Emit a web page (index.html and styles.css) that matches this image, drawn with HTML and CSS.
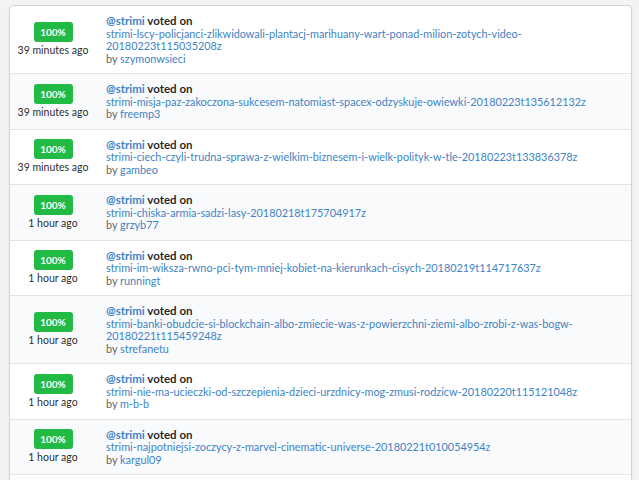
FILE: index.html
```html
<!DOCTYPE html>
<html lang="pl">
<head>
    <meta charset="UTF-8">
    <title>Votes</title>
    <link rel="stylesheet" href="styles.css">
</head>
<body>
    <div class="page">
        <div class="votes">
            <div class="vote-row">
                <div class="when"><span class="pct">100%</span><span class="ago">39 minutes ago</span></div>
                <div class="what">
                    <div class="head"><a href="#">@strimi</a> voted on</div>
                    <a class="post" href="#">strimi-lscy-policjanci-zlikwidowali-plantacj-marihuany-wart-ponad-milion-zotych-video-20180223t115035208z</a>
                    <div class="by">by <a href="#">szymonwsieci</a></div>
                </div>
            </div>
            <div class="vote-row">
                <div class="when"><span class="pct">100%</span><span class="ago">39 minutes ago</span></div>
                <div class="what">
                    <div class="head"><a href="#">@strimi</a> voted on</div>
                    <a class="post" href="#">strimi-misja-paz-zakoczona-sukcesem-natomiast-spacex-odzyskuje-owiewki-20180223t135612132z</a>
                    <div class="by">by <a href="#">freemp3</a></div>
                </div>
            </div>
            <div class="vote-row">
                <div class="when"><span class="pct">100%</span><span class="ago">39 minutes ago</span></div>
                <div class="what">
                    <div class="head"><a href="#">@strimi</a> voted on</div>
                    <a class="post" href="#">strimi-ciech-czyli-trudna-sprawa-z-wielkim-biznesem-i-wielk-polityk-w-tle-20180223t133836378z</a>
                    <div class="by">by <a href="#">gambeo</a></div>
                </div>
            </div>
            <div class="vote-row">
                <div class="when"><span class="pct">100%</span><span class="ago">1 hour ago</span></div>
                <div class="what">
                    <div class="head"><a href="#">@strimi</a> voted on</div>
                    <a class="post" href="#">strimi-chiska-armia-sadzi-lasy-20180218t175704917z</a>
                    <div class="by">by <a href="#">grzyb77</a></div>
                </div>
            </div>
            <div class="vote-row">
                <div class="when"><span class="pct">100%</span><span class="ago">1 hour ago</span></div>
                <div class="what">
                    <div class="head"><a href="#">@strimi</a> voted on</div>
                    <a class="post" href="#">strimi-im-wiksza-rwno-pci-tym-mniej-kobiet-na-kierunkach-cisych-20180219t114717637z</a>
                    <div class="by">by <a href="#">runningt</a></div>
                </div>
            </div>
            <div class="vote-row">
                <div class="when"><span class="pct">100%</span><span class="ago">1 hour ago</span></div>
                <div class="what">
                    <div class="head"><a href="#">@strimi</a> voted on</div>
                    <a class="post" href="#">strimi-banki-obudcie-si-blockchain-albo-zmiecie-was-z-powierzchni-ziemi-albo-zrobi-z-was-bogw-20180221t115459248z</a>
                    <div class="by">by <a href="#">strefanetu</a></div>
                </div>
            </div>
            <div class="vote-row">
                <div class="when"><span class="pct">100%</span><span class="ago">1 hour ago</span></div>
                <div class="what">
                    <div class="head"><a href="#">@strimi</a> voted on</div>
                    <a class="post" href="#">strimi-nie-ma-ucieczki-od-szczepienia-dzieci-urzdnicy-mog-zmusi-rodzicw-20180220t115121048z</a>
                    <div class="by">by <a href="#">m-b-b</a></div>
                </div>
            </div>
            <div class="vote-row">
                <div class="when"><span class="pct">100%</span><span class="ago">1 hour ago</span></div>
                <div class="what">
                    <div class="head"><a href="#">@strimi</a> voted on</div>
                    <a class="post" href="#">strimi-najpotniejsi-zoczycy-z-marvel-cinematic-universe-20180221t010054954z</a>
                    <div class="by">by <a href="#">kargul09</a></div>
                </div>
            </div>
            <div class="vote-row vote-row-next"></div>
        </div>
    </div>
</body>
</html>
```

FILE: styles.css
```css
body {
    margin: 0;
    background-color: #f2f3f5;
    font-family: Lato, "Open Sans", sans-serif;
    color: rgba(0, 0, 0, 0.87);
    overflow: hidden;
}

a {
    color: #4183c4;
    text-decoration: none;
}

.page {
    padding: 5px 7px 0 9px;
}

.votes {
    background-color: #fff;
    border: 1px solid #d4d4d5;
    border-radius: 4px 4px 0 0;
    box-shadow: 0 1px 2px rgba(34, 36, 38, 0.08);
}

.vote-row {
    display: grid;
    grid-template-columns: 86px 1fr;
    border-top: 1px solid #e4e4e5;
}

.vote-row:first-child {
    border-top: none;
}

.vote-row:nth-child(even) {
    background-color: #f9fafb;
}

/* the row that starts just below the frame */
.vote-row-next {
    height: 40px;
}

.when {
    display: flex;
    flex-direction: column;
    align-items: center;
    justify-content: center;
    gap: 2px;
}

.pct {
    background-color: #21ba45;
    color: #fff;
    font-size: 10px;
    font-weight: 700;
    width: 39px;
    height: 20px;
    line-height: 20px;
    text-align: center;
    border-radius: 3px;
}

.ago {
    font-size: 10.5px;
    line-height: 13px;
}

.what {
    padding: 8px 12px 8px 10px;
    font-size: 10.85px;
    line-height: 12.5px;
}

.head {
    font-size: 11.5px;
    font-weight: 700;
    line-height: 13.5px;
}

.post {
    display: block;
}

.by {
    color: #666;
}
```
